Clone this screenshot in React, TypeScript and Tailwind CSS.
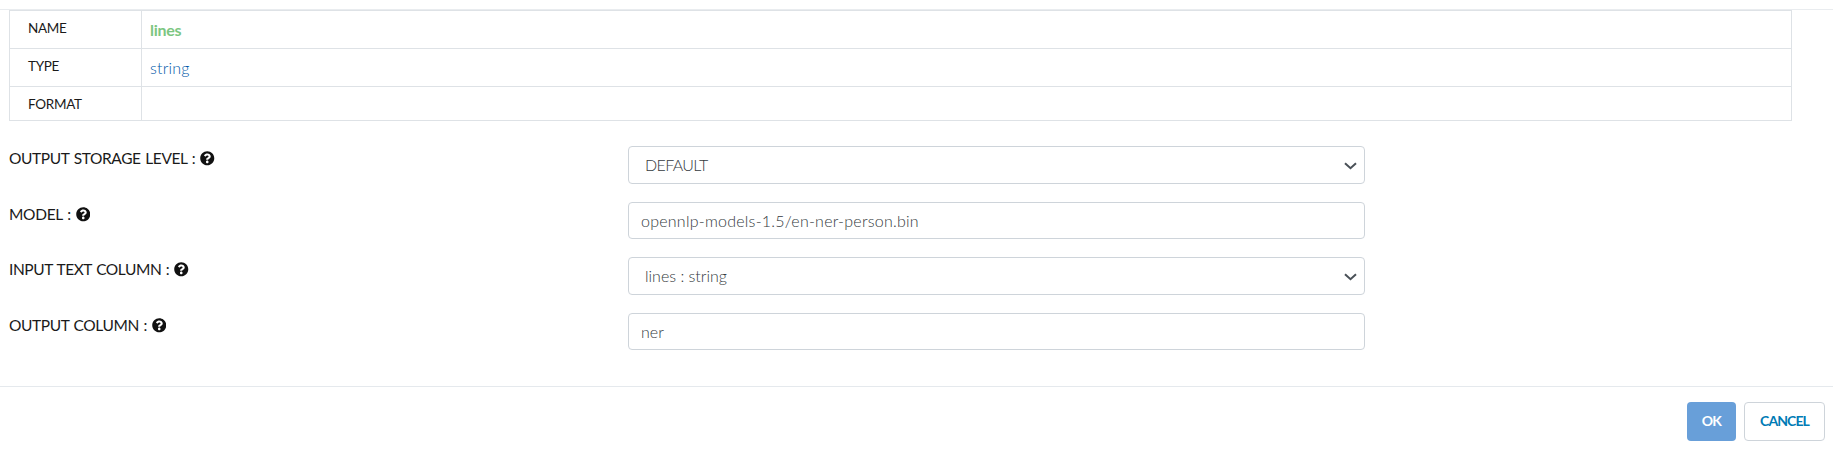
import type { ReactNode } from "react";
import { FaQuestionCircle } from "react-icons/fa";

function SchemaRow({ label, height, children }: { label: string; height: string; children?: ReactNode }) {
  return (
    <div className={`flex border-b border-[#dee2e6] ${height}`}>
      <div className="w-[132px] shrink-0 border-r border-[#dee2e6] pl-[18px] pt-[7px] text-[13.5px] leading-5 tracking-[-0.3px] text-[#1a1a1a]">
        {label}
      </div>
      <div className="pl-2 pt-[7px] text-base leading-6">{children}</div>
    </div>
  );
}

function Field({ label, tracking, height, children }: { label: string; tracking: string; height: string; children: ReactNode }) {
  return (
    <div className={`flex ${height}`}>
      <div className="flex w-[619px] shrink-0 items-start gap-[5px] text-[15.5px] leading-6 text-[#1a1a1a]">
        <span className={`[word-spacing:1px] ${tracking}`}>{label}</span>
        <FaQuestionCircle className="mt-[5px] size-[14.5px] text-[#111]" />
      </div>
      {children}
    </div>
  );
}

function Select({ value, tracking }: { value: string; tracking: string }) {
  return (
    <div className="flex h-[38px] w-[737px] items-center justify-between rounded-[4px] border border-[#ced4da] pl-4 pr-[7px] text-base font-light text-[#343a40]">
      <span className={tracking}>{value}</span>
      <svg className="mt-px h-[8px] w-[13px]" viewBox="0 0 13 8" fill="none" stroke="#495057" strokeWidth="2">
        <path d="M1 1.2 6.5 6.2 12 1.2" />
      </svg>
    </div>
  );
}

function Input({ value, tracking }: { value: string; tracking: string }) {
  return (
    <div className="flex h-[37px] w-[737px] items-center rounded-[4px] border border-[#ced4da] pl-3 text-base font-light text-[#343a40]">
      <span className={tracking}>{value}</span>
    </div>
  );
}

export default function App() {
  return (
    <div className="h-[451px] w-full overflow-hidden bg-white pt-[9px] font-['Lato',sans-serif]">
      <div className="border-t border-[#e9ecef]">
        <div className="ml-[9px] w-[1783px] border-x border-t border-[#dee2e6]">
          <SchemaRow label="NAME" height="h-[38px]">
            <span className="font-bold tracking-[-0.25px] text-[#7cc681]">lines</span>
          </SchemaRow>
          <SchemaRow label="TYPE" height="h-[38px]">
            <span className="font-light tracking-[0.2px] text-[#0059a8]">string</span>
          </SchemaRow>
          <SchemaRow label="FORMAT" height="h-[34px]" />
        </div>
      </div>
      <div className="h-[265px] pl-[9px] pt-[25px]">
        <Field label="OUTPUT STORAGE LEVEL :" tracking="tracking-[-0.38px]" height="h-14">
          <Select value="DEFAULT" tracking="tracking-[-0.65px]" />
        </Field>
        <Field label="MODEL :" tracking="tracking-[-0.3px]" height="h-[55px]">
          <Input value="opennlp-models-1.5/en-ner-person.bin" tracking="tracking-[0.24px]" />
        </Field>
        <Field label="INPUT TEXT COLUMN :" tracking="tracking-[-0.43px]" height="h-14">
          <Select value="lines : string" tracking="tracking-normal" />
        </Field>
        <Field label="OUTPUT COLUMN :" tracking="tracking-[-0.4px]" height="h-[37px]">
          <Input value="ner" tracking="tracking-normal" />
        </Field>
      </div>
      <div className="flex justify-end gap-2 border-t border-[#e5e9ed] pr-2 pt-[15px] text-[14px] font-bold">
        <button className="h-[39px] w-[49px] rounded-[4px] bg-[#689fd9] pb-[2px] tracking-[-0.7px] text-white">OK</button>
        <button className="h-[39px] w-[81px] rounded-[4px] border border-[#ced4da] pb-[2px] tracking-[-0.9px] text-[#007bb5]">CANCEL</button>
      </div>
    </div>
  );
}
